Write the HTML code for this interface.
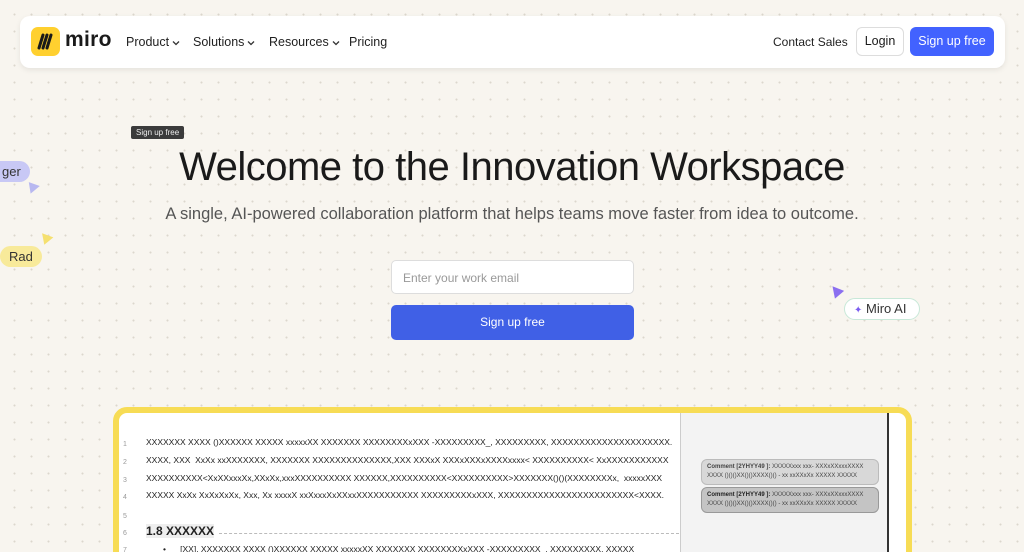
<!DOCTYPE html>
<html style="height:552px;overflow:hidden"><head><meta charset="utf-8"><style>
*{margin:0;padding:0;box-sizing:border-box}
body{width:1024px;height:552px;overflow:hidden;position:relative;font-family:"Liberation Sans",sans-serif;background:#f8f5ef;
background-image:radial-gradient(circle,#dcd7cd 0.8px,transparent 1.2px);background-size:17px 17px;background-position:6px 6px}
.nav{position:absolute;left:20px;top:16px;width:985px;height:52px;background:#fff;border-radius:10px;box-shadow:0 2px 6px rgba(0,0,0,.08)}
.logo{position:absolute;left:11px;top:11px;width:29px;height:29px;background:#ffd02f;border-radius:7px}
.nv{position:absolute;top:19px;font-size:12.5px;color:#1f1f1f;white-space:nowrap}
.nv svg{vertical-align:middle;margin-left:3px}
.abs{position:absolute}
.clip{position:absolute;left:113px;top:407px;width:799px;height:145px;overflow:hidden}
.doc{position:absolute;left:0;top:0;width:799px;height:160px;border:6px solid #f7dc55;border-radius:14px;background:#fff;overflow:hidden}
.ln{position:absolute;left:27px;font-family:"Liberation Sans Narrow","Liberation Sans",sans-serif;font-size:8.5px;color:#222;white-space:nowrap}
.num{position:absolute;left:4px;font-size:7px;color:#999}
.cm{position:absolute;left:21px;width:178px;height:26px;border-radius:6px;font-family:"Liberation Sans Narrow",sans-serif;font-size:6px;line-height:9px;padding:3px 5px;color:#444;white-space:nowrap;overflow:hidden}
</style></head><body>
<div class="nav">
 <div class="logo"><svg width="29" height="29" viewBox="0 0 29 29"><path d="M8 21 L12 8 M12 21 L16 8 M16 21 L20 8" stroke="#1a1a1a" stroke-width="3" stroke-linecap="round"/></svg></div>
 <div class="abs" style="left:45px;top:12px;font-size:21px;font-weight:bold;color:#1a1a1a;letter-spacing:0.3px">miro</div>
 <div class="nv" style="left:106px">Product<svg width="8" height="6" viewBox="0 0 8 6"><path d="M1 1.5 L4 4.5 L7 1.5" stroke="#333" stroke-width="1.3" fill="none"/></svg></div>
 <div class="nv" style="left:173px">Solutions<svg width="8" height="6" viewBox="0 0 8 6"><path d="M1 1.5 L4 4.5 L7 1.5" stroke="#333" stroke-width="1.3" fill="none"/></svg></div>
 <div class="nv" style="left:249px">Resources<svg width="8" height="6" viewBox="0 0 8 6"><path d="M1 1.5 L4 4.5 L7 1.5" stroke="#333" stroke-width="1.3" fill="none"/></svg></div>
 <div class="nv" style="left:329px">Pricing</div>
 <div class="nv" style="left:753px;font-size:12px">Contact Sales</div>
 <div class="abs" style="left:836px;top:11px;width:48px;height:29px;border:1px solid #ddd;border-radius:6px;font-size:12.5px;text-align:center;line-height:27px;color:#1a1a1a">Login</div>
 <div class="abs" style="left:890px;top:11px;width:84px;height:29px;background:#4262ff;border-radius:6px;font-size:12.5px;text-align:center;line-height:29px;color:#fff">Sign up free</div>
</div>
<div class="abs" style="left:131px;top:126px;background:#3b3b3b;color:#eee;font-size:8px;padding:2px 5px;border-radius:2px">Sign up free</div>
<div class="abs" style="left:0;top:145px;width:1024px;text-align:center;font-size:40px;color:#1a1a1a;letter-spacing:-0.5px">Welcome to the Innovation Workspace</div>
<div class="abs" style="left:0;top:205px;width:1024px;text-align:center;font-size:16.5px;color:#555">A single, AI-powered collaboration platform that helps teams move faster from idea to outcome.</div>
<div class="abs" style="left:391px;top:260px;width:243px;height:34px;background:#fff;border:1px solid #ddd;border-radius:5px;font-size:12px;color:#999;padding:10px 11px">Enter your work email</div>
<div class="abs" style="left:391px;top:305px;width:243px;height:35px;background:#4060e6;border-radius:5px;font-size:12px;color:#fff;text-align:center;line-height:35px">Sign up free</div>
<div class="abs" style="left:-10px;top:161px;background:#c8c8f5;color:#333;font-size:13px;padding:3px 9px 3px 12px;border-radius:11px">ger</div>
<div class="abs" style="left:26px;top:181px;width:0;height:0;border-left:6px solid transparent;border-right:6px solid transparent;border-bottom:10px solid #b8b8f0;transform:rotate(-40deg)"></div>
<div class="abs" style="left:0;top:246px;background:#f8ea9a;color:#333;font-size:13px;padding:3px 9px;border-radius:11px">Rad</div>
<div class="abs" style="left:40px;top:235px;width:0;height:0;border-left:6px solid transparent;border-right:6px solid transparent;border-top:10px solid #f5e070;transform:rotate(20deg)"></div>
<div class="abs" style="left:830px;top:285px;width:0;height:0;border-left:6px solid transparent;border-right:6px solid transparent;border-bottom:11px solid #8b6ff0;transform:rotate(-40deg)"></div>
<div class="abs" style="left:844px;top:298px;width:76px;height:22px;background:#fff;border:1.5px solid #c8e8d8;border-radius:11px;font-size:13px;color:#333;line-height:19px;padding-left:9px"><span style="color:#7b5cf0;font-size:10px">✦</span> Miro AI</div>
<div class="clip"><div class="doc">
 <div class="abs" style="left:561px;top:0;width:207px;height:200px;background:#f3f3f3;border-left:1px solid #ccc"></div>
 <div class="abs" style="left:768px;top:0;width:2px;height:200px;background:#333"></div>
 <div class="abs" style="left:561px;top:0">
  <div class="cm" style="top:46px;background:#d8d8d8;border:1px solid #bbb"><b style="font-family:'Liberation Sans',sans-serif">Comment [2YHYY49 ]:</b> XXXXXxxx xxx- XXXxXXxxxXXXX<br>XXXX ()()()XX()()XXXX()() - xx xxXXxXx XXXXX XXXXX</div>
  <div class="cm" style="top:74px;background:#c4c4c4;border:1px solid #999"><b style="font-family:'Liberation Sans',sans-serif;color:#222">Comment [2YHYY49 ]:</b> XXXXXxxx xxx- XXXxXXxxxXXXX<br>XXXX ()()()XX()()XXXX()() - xx xxXXxXx XXXXX XXXXX</div>
 </div>
 <div class="num" style="top:28px">1</div><div class="ln" style="top:24px">XXXXXXX XXXX ()XXXXXX XXXXX xxxxxXX XXXXXXX XXXXXXXXxXXX -XXXXXXXXX_, XXXXXXXXX, XXXXXXXXXXXXXXXXXXXXX.</div>
 <div class="num" style="top:46px">2</div><div class="ln" style="top:42px">XXXX, XXX&nbsp; XxXx xxXXXXXXX, XXXXXXX XXXXXXXXXXXXXX,XXX XXXxX XXXxXXXxXXXXxxxx&lt; XXXXXXXXXX&lt; XxXXXXXXXXXXX</div>
 <div class="num" style="top:64px">3</div><div class="ln" style="top:60px">XXXXXXXXXX&lt;XxXXxxxXx,XXxXx,xxxXXXXXXXXXX XXXXXX,XXXXXXXXXX&lt;XXXXXXXXXX&gt;XXXXXXX()()(XXXXXXXXx,&nbsp; xxxxxXXX</div>
 <div class="num" style="top:81px">4</div><div class="ln" style="top:77px">XXXXX XxXx XxXxXxXx, Xxx, Xx xxxxX xxXxxxXxXXxxXXXXXXXXXXX XXXXXXXXXxXXX, XXXXXXXXXXXXXXXXXXXXXXXX&lt;XXXX.</div>
 <div class="num" style="top:100px">5</div>
 <div class="num" style="top:117px">6</div><div class="ln" style="top:111px;font-size:12px;font-weight:bold;background:#eee">1.8 XXXXXX</div>
 <div class="abs" style="left:100px;top:120px;width:460px;border-top:1px dashed #bbb"></div>
 <div class="num" style="top:134px">7</div><div class="ln" style="top:131px;left:44px">•&nbsp;&nbsp;&nbsp;&nbsp;&nbsp; [XX]. XXXXXXX XXXX ()XXXXXX XXXXX xxxxxXX XXXXXXX XXXXXXXXxXXX -XXXXXXXXX_, XXXXXXXXX, XXXXX</div>
</div></div>
</body></html>
